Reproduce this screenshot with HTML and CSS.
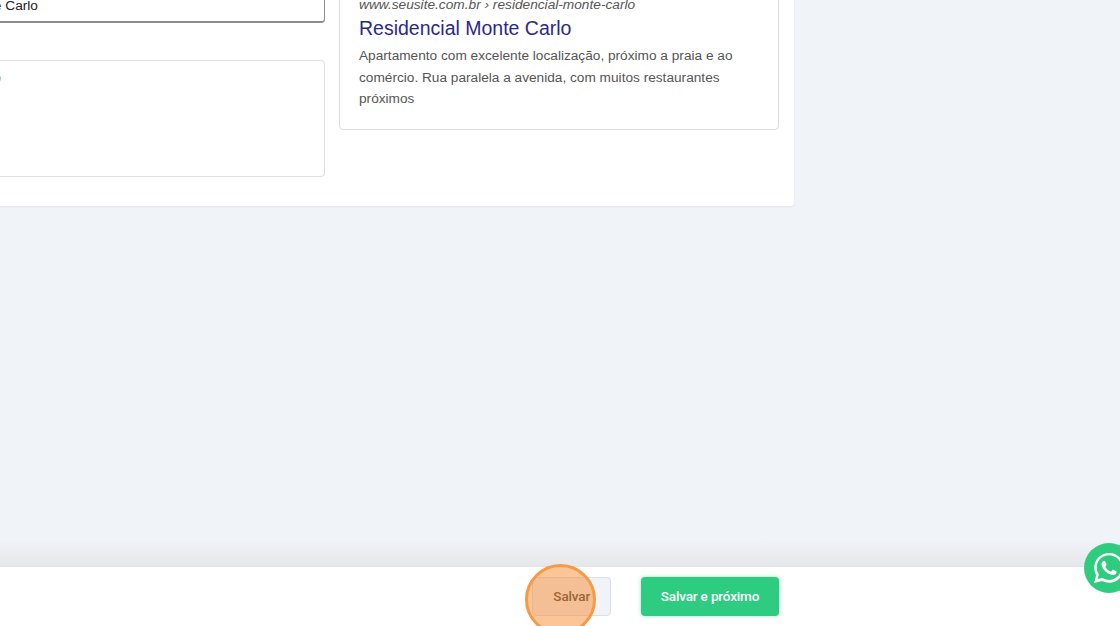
FILE: index.html
```html
<!DOCTYPE html>
<html lang="pt-BR">
<head>
<meta charset="utf-8">
<title>Residencial Monte Carlo</title>
<link rel="stylesheet" href="styles.css">
</head>
<body>
<main class="page">
  <section class="card">
    <div class="col-left">
      <div class="input">Residencial Monte Carlo</div>
      <div class="textarea">Descrição</div>
    </div>
    <article class="preview">
      <div class="url">www.seusite.com.br › residencial-monte-carlo</div>
      <h2 class="title">Residencial Monte Carlo</h2>
      <p class="desc">Apartamento com excelente localização, próximo a praia e ao comércio. Rua paralela a avenida, com muitos restaurantes próximos</p>
    </article>
  </section>
</main>
<footer class="footer">
  <button class="btn btn-light">Salvar</button>
  <button class="btn btn-green">Salvar e próximo</button>
</footer>
<div class="highlight"></div>
<a class="whatsapp" aria-label="WhatsApp">
  <svg viewBox="0 0 24 24" width="30" height="30"><path fill="#fff" d="M17.47 14.38c-.3-.15-1.76-.87-2.03-.97-.27-.1-.47-.15-.67.15-.2.3-.77.97-.94 1.16-.17.2-.35.22-.64.08-.3-.15-1.26-.46-2.39-1.48-.88-.79-1.48-1.76-1.65-2.06-.17-.3-.02-.46.13-.6.13-.14.3-.35.45-.52.15-.17.2-.3.3-.5.1-.2.05-.37-.03-.52-.07-.15-.67-1.61-.92-2.2-.24-.58-.49-.5-.67-.51h-.57c-.2 0-.52.07-.79.37-.27.3-1.04 1.02-1.04 2.48s1.07 2.88 1.21 3.07c.15.2 2.1 3.2 5.08 4.49.71.3 1.26.49 1.69.63.71.22 1.36.19 1.87.12.57-.09 1.76-.72 2-1.41.25-.7.25-1.29.18-1.41-.08-.13-.27-.2-.57-.35zM12.05 21.5h-.01a9.87 9.87 0 0 1-5.03-1.38l-.36-.21-3.74.98 1-3.65-.24-.37a9.86 9.86 0 0 1-1.51-5.26c0-5.45 4.44-9.88 9.89-9.88a9.82 9.82 0 0 1 6.99 2.9 9.83 9.83 0 0 1 2.89 7c0 5.45-4.44 9.87-9.88 9.87zM20.47 3.49A11.82 11.82 0 0 0 12.05 0C5.5 0 .16 5.34.16 11.89c0 2.1.55 4.14 1.59 5.95L.06 24l6.3-1.65a11.88 11.88 0 0 0 5.68 1.45h.01c6.55 0 11.89-5.34 11.89-11.89 0-3.18-1.24-6.17-3.47-8.42z"/></svg>
</a>
</body>
</html>
```
FILE: styles.css
```css
* { box-sizing: border-box; }
html, body { margin: 0; height: 626px; overflow: hidden; }
body {
  position: relative;
  display: flex;
  flex-direction: column;
  background: #f0f3f8;
  font-family: "Liberation Sans", Arial, sans-serif;
}
.page { flex: 1; overflow: hidden; background: linear-gradient(to bottom, #f0f3f8 540px, #e6e7eb 566px); }
.card {
  display: flex;
  align-items: flex-start;
  gap: 14px;
  width: 924px;
  margin: -130px 0 0 -130px;
  padding: 0 15px 30px;
  height: 336px;
  background: #fff;
  border-radius: 4px;
  box-shadow: 0 1px 2px rgba(120, 130, 150, .12);
}
.col-left { width: 440px; flex: none; padding-top: 100px; }
.input {
  height: 52px;
  margin-top: 1px;
  padding: 26px 286px 0 0;
  border: 1px solid #8c8c8c;
  border-bottom-width: 2px;
  border-radius: 4px;
  font-size: 13.7px;
  line-height: 16px;
  color: #222;
  text-align: right;
  white-space: nowrap;
}
.textarea {
  height: 117px;
  margin-top: 37px;
  padding: 10px 323px 0 0;
  border: 1px solid #dcdfe3;
  border-radius: 4px;
  font-size: 12px;
  line-height: 15px;
  color: #777;
  text-align: right;
}
.preview {
  width: 440px;
  flex: none;
  height: 260px;
  padding: 126px 19px 0;
  border: 1px solid #d9dce1;
  border-radius: 4px;
}
.url { font-size: 13.7px; font-style: italic; line-height: 16px; color: #555; }
.title { margin: 3px 0 0; font-size: 19.5px; font-weight: 400; line-height: 25px; color: #2b2a85; }
.desc { margin: 4px 0 0; font-size: 13.67px; line-height: 21.7px; color: #555; }
.footer {
  display: flex;
  align-items: flex-start;
  gap: 30px;
  height: 60px;
  flex: none;
  padding: 10px 0 0 532px;
  background: #fff;
  border-top: 1px solid #e2e3e8;
}
.btn {
  height: 39px;
  padding: 0 0 2px;
  border-radius: 4px;
  font-family: Roboto, sans-serif;
  font-size: 13.5px;
  font-weight: 500;
  letter-spacing: -.15px;
}
.btn-light { width: 79px; background: #f0f3f8; border: 1px solid #d9deea; color: #3a3a40; text-align: right; padding-right: 20px; }
.btn-green { width: 138px; background: #2ecc80; border: 0; color: #fff; box-shadow: 0 0 4px rgba(46, 204, 128, .45); }
.highlight {
  position: absolute;
  left: 525px;
  top: 564px;
  width: 71px;
  height: 71px;
  border: 3px solid #f79a45;
  border-radius: 50%;
  background: rgba(247, 140, 50, .5);
}
.whatsapp {
  position: absolute;
  left: 1084px;
  top: 543px;
  width: 50px;
  height: 50px;
  display: flex;
  align-items: center;
  justify-content: center;
  border-radius: 50%;
  background: #2fcb7e;
}
```
